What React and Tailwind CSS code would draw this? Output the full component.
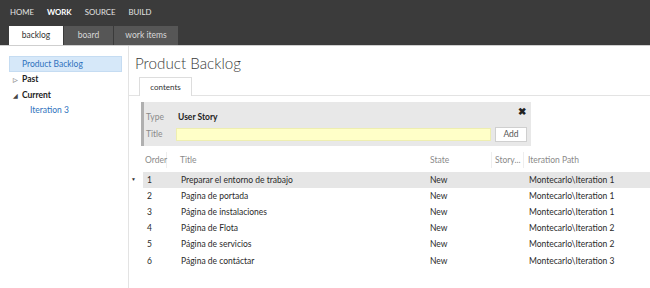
import React from "react";

const rows = [
  ["1", "Preparar el entorno de trabajo", "New", "Montecarlo\\Iteration 1"],
  ["2", "Pagina de portada", "New", "Montecarlo\\Iteration 1"],
  ["3", "Página de instalaciones", "New", "Montecarlo\\Iteration 1"],
  ["4", "Página de Flota", "New", "Montecarlo\\Iteration 2"],
  ["5", "Página de servicios", "New", "Montecarlo\\Iteration 2"],
  ["6", "Página de contáctar", "New", "Montecarlo\\Iteration 3"],
];

export default function App() {
  return (
    <div className="w-[650px] h-[288px] overflow-hidden bg-white text-[#2a2a2a] font-['Lato',sans-serif] text-[8.5px] flex flex-col">
      <div className="h-[46px] bg-[#3b3b3b] flex flex-col border-b border-[#cfcfcf]">
        <div className="h-[26px] flex items-center pl-[10px] gap-[13px] text-[7.8px] text-[#e4e4e4]">
          <span>HOME</span>
          <span className="font-bold text-white">WORK</span>
          <span>SOURCE</span>
          <span>BUILD</span>
        </div>
        <div className="flex pl-[9px] h-[19px] text-[8.5px]">
          <div className="w-[54px] bg-white text-[#333] flex items-center justify-center">backlog</div>
          <div className="w-[49px] ml-px bg-[#565656] text-[#d8d8d8] flex items-center justify-center">board</div>
          <div className="w-[64px] ml-px bg-[#565656] text-[#d8d8d8] flex items-center justify-center">work items</div>
        </div>
      </div>
      <div className="flex flex-1">
        <div className="w-[129px] border-r border-[#e3e3e3] pt-[10px] pl-[9px] pr-[6px]">
          <div className="h-[16px] bg-[#d6e8f9] border border-[#c5dcf2] text-[#2f72bd] pl-[12px] flex items-center">Product Backlog</div>
          <div className="h-[15.5px] flex items-center font-bold text-[#222]">
            <span className="w-[13px] text-[6px] text-[#999] pl-[4px]">▷</span>Past
          </div>
          <div className="h-[15.5px] flex items-center font-bold text-[#222]">
            <span className="w-[13px] text-[6px] text-[#444] pl-[4px]">◢</span>Current
          </div>
          <div className="h-[15.5px] flex items-center text-[#2f72bd] pl-[21px]">Iteration 3</div>
        </div>
        <div className="flex-1 flex flex-col">
          <div className="pl-[6px] pt-[6px] h-[31px] text-[15.2px] text-[#3a3a3a] font-light leading-[22px]">Product Backlog</div>
          <div className="flex border-b border-[#e3e3e3] h-[19px] pl-[10px]">
            <div className="w-[53px] border border-b-0 border-[#ddd] bg-white text-[8px] text-[#333] flex items-center justify-center -mb-px">contents</div>
          </div>
          <div className="ml-[12px] mt-[6px] w-[390px] h-[44px] bg-[#e8e8e8] border-l-[3px] border-[#b0b0b0] flex flex-col pl-[2px] pr-[4px] relative">
            <div className="h-[24px] flex items-center pt-[7px]">
              <span className="w-[32px] text-[#8a8a8a]">Type</span>
              <span className="font-bold text-[#222]">User Story</span>
            </div>
            <div className="flex items-center h-[15px] mt-[1px]">
              <span className="w-[30px] text-[#8a8a8a]">Title</span>
              <div className="w-[315px] h-[13px] bg-[#ffffc8] border border-[#eeeeb0]"></div>
              <div className="ml-[4px] w-[32px] h-[15px] bg-white border border-[#cfcfcf] flex items-center justify-center text-[#555]">Add</div>
            </div>
            <span className="absolute right-[5px] top-[4px] text-[10px] font-bold text-[#222] leading-none">✖</span>
          </div>
          <div className="mt-[6px] ml-[14px] flex flex-col">
            <div className="flex h-[16px] mb-[4px] items-center text-[#8a8a8a]">
              <div className="w-[24px] pl-[2px] border-r border-[#eee] h-[16px] flex items-center">Order</div>
              <div className="w-[263px] pl-[13px]">Title</div>
              <div className="w-[62px] border-r border-[#eee] h-[16px] flex items-center">State</div>
              <div className="w-[32px] pl-[3px] border-r border-[#eee] h-[16px] flex items-center">Story...</div>
              <div className="pl-[4px]">Iteration Path</div>
            </div>
            {rows.map((r, i) => (
              <div key={i} className={`flex h-[16.2px] items-center relative ${i === 0 ? "bg-[#e6e6e6]" : ""}`}>
                {i === 0 && <span className="absolute left-[-12px] text-[5px] text-[#333]">▼</span>}
                <div className="w-[24px] pl-[4px]">{r[0]}</div>
                <div className="w-[263px] pl-[14px]">{r[1]}</div>
                <div className="w-[94px]">{r[2]}</div>
                <div className="pl-[5px]">{r[3]}</div>
              </div>
            ))}
          </div>
        </div>
      </div>
    </div>
  );
}
